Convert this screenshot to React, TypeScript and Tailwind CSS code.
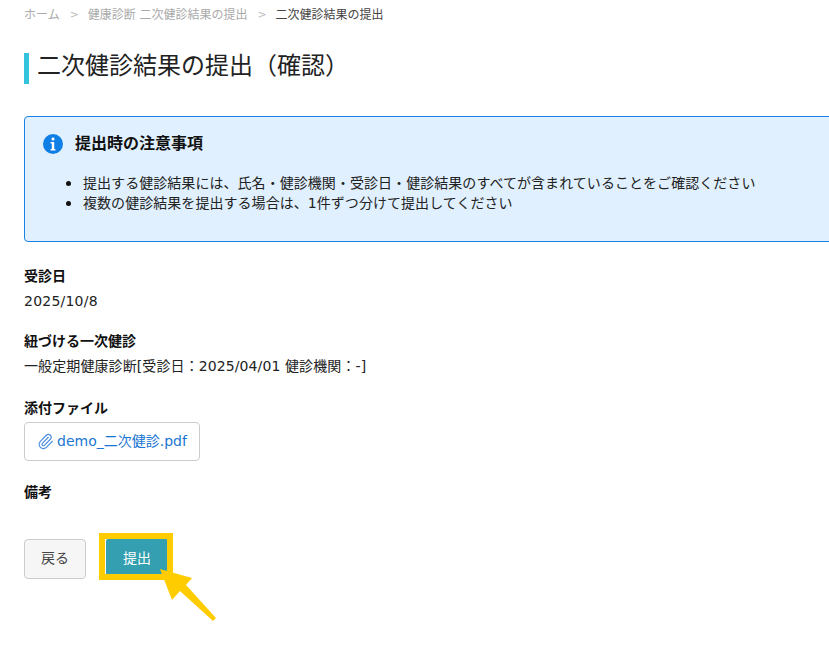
import React from "react";
import { Paperclip } from "lucide-react";

function Field({ label, children, className }: { label: string; children?: React.ReactNode; className?: string }) {
  return (
    <div className={className}>
      <div className="text-[14px] leading-[20px] font-bold text-[#111]">{label}</div>
      {children}
    </div>
  );
}

const notes = [
  "提出する健診結果には、氏名・健診機関・受診日・健診結果のすべてが含まれていることをご確認ください",
  "複数の健診結果を提出する場合は、1件ずつ分けて提出してください",
];

export default function App() {
  return (
    <div className="relative w-[829px] h-[664px] overflow-hidden bg-white pl-6 font-['DejaVu_Sans','Noto_Sans_CJK_JP',sans-serif] text-[#222]">
      <nav className="flex items-center h-[18px] pt-[1px] mt-[5px] text-[12px] leading-[18px] text-[#aaa]">
        <span>ホーム</span>
        <span className="mx-[10px] w-[8px] text-center text-[11px] text-[#bbb]">&gt;</span>
        <span>健康診断 二次健診結果の提出</span>
        <span className="mx-[10px] w-[8px] text-center text-[11px] text-[#bbb]">&gt;</span>
        <span className="text-[#444]">二次健診結果の提出</span>
      </nav>
      <h1 className="mt-[30px] h-[31px] border-l-[5px] border-[#33c3dc] pl-[8px] text-[24px] leading-[26px] font-normal text-[#222]">
        二次健診結果の提出（確認）
      </h1>
      <section className="mt-[32px] w-[830px] h-[126px] rounded-l-[4px] border border-[#1a82e2] bg-[#e0f0fe] pl-[18px] pt-[15px]">
        <div className="flex items-center gap-[12px] h-[24px]">
          <svg width="20" height="20" viewBox="0 0 20 20">
            <circle cx="10" cy="10" r="10" fill="#0f7fe6" />
            <rect x="8.6" y="3.6" width="2.8" height="2.8" rx="1.2" fill="#fff" />
            <path d="M7.6 8h3.6v7h1.2v1.4H7.6V15h1.2V9.4H7.6z" fill="#fff" />
          </svg>
          <span className="text-[16px] font-bold leading-[24px] text-[#111]">提出時の注意事項</span>
        </div>
        <ul className="mt-[17px] pl-[23px] text-[14px] leading-[20px] tracking-[0.05px] text-[#222]">
          {notes.map((note) => (
            <li key={note} className="flex items-center gap-[12px]">
              <span className="w-[5px] h-[5px] rounded-full bg-[#111]" />
              <span>{note}</span>
            </li>
          ))}
        </ul>
      </section>
      <Field label="受診日" className="mt-[24px]">
        <div className="mt-[5px] text-[14px] leading-[20px] tracking-[0.22px]">2025/10/8</div>
      </Field>
      <Field label="紐づける一次健診" className="mt-[20px]">
        <div className="mt-[5px] text-[14px] leading-[20px] tracking-[0.1px]">一般定期健康診断[受診日：2025/04/01 健診機関：-]</div>
      </Field>
      <Field label="添付ファイル" className="mt-[22px]">
        <a className="mt-[4px] flex w-[176px] h-[39px] items-center justify-center gap-[3px] rounded-[4px] border border-[#ccc] text-[14px] text-[#1a76d2]">
          <Paperclip size={17} strokeWidth={1.6} className="text-[#4a8ce0]" />
          demo_二次健診.pdf
        </a>
      </Field>
      <Field label="備考" className="mt-[21px]" />
      <div className="mt-[37px] flex items-center gap-[20px]">
        <button className="w-[62px] h-[40px] pb-[1px] rounded-[4px] border border-[#ccc] bg-[#f6f6f6] text-[14px] text-[#444]">戻る</button>
        <button className="w-[62px] h-[40px] pb-[1px] rounded-[2px] bg-[#339fb0] text-[14px] text-white">提出</button>
      </div>
      <div className="absolute left-[99px] top-[533px] w-[74px] h-[47px] border-[6px] border-[#ffcc00]" />
      <svg className="absolute left-[155px] top-[565px]" width="70" height="62" viewBox="0 0 70 62">
        <path d="M5 4 L37 13 L31 20 L61 53 L58 56 L25 26 L17 35 Z" fill="#ffcc00" />
      </svg>
    </div>
  );
}
